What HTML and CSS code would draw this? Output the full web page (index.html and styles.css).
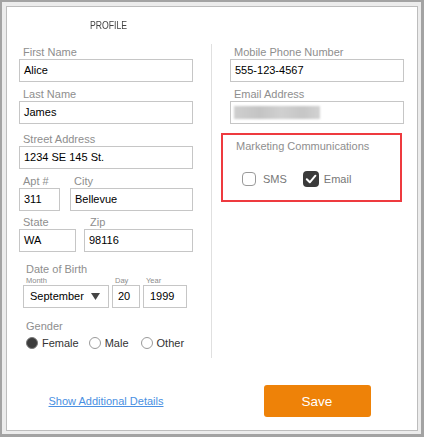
FILE: index.html
```html
<!DOCTYPE html>
<html>
<head>
<meta charset="utf-8">
<link rel="stylesheet" href="styles.css">
</head>
<body>
<div class="frame">
  <div class="card">
    <div class="header"><span class="title">PROFILE</span></div>
    <div class="main">
      <div class="col">
        <div class="field first">
          <div class="label">First Name</div>
          <div class="input">Alice</div>
        </div>
        <div class="field">
          <div class="label">Last Name</div>
          <div class="input">James</div>
        </div>
        <div class="field street">
          <div class="label">Street Address</div>
          <div class="input">1234 SE 145 St.</div>
        </div>
        <div class="pair apt-row">
          <div class="field apt">
            <div class="label">Apt #</div>
            <div class="input">311</div>
          </div>
          <div class="field city">
            <div class="label">City</div>
            <div class="input">Bellevue</div>
          </div>
        </div>
        <div class="pair state-row">
          <div class="field state">
            <div class="label">State</div>
            <div class="input">WA</div>
          </div>
          <div class="field zip">
            <div class="label zip-label">Zip</div>
            <div class="input">98116</div>
          </div>
        </div>
        <div class="section dob">
          <div class="label sec-label">Date of Birth</div>
          <div class="dob-row">
            <div class="dob-item month">
              <div class="sublabel">Month</div>
              <div class="input select"><span>September</span>
                <svg class="caret" width="9" height="7" viewBox="0 0 9 7"><polygon points="0,0 9,0 4.5,7" fill="#454545"/></svg>
              </div>
            </div>
            <div class="dob-item day">
              <div class="sublabel">Day</div>
              <div class="input dob-input">20</div>
            </div>
            <div class="dob-item year">
              <div class="sublabel">Year</div>
              <div class="input dob-input">1999</div>
            </div>
          </div>
        </div>
        <div class="section gender">
          <div class="label sec-label">Gender</div>
          <div class="radio-row">
            <div class="opt"><span class="radio checked"></span><span class="opt-text">Female</span></div>
            <div class="opt male"><span class="radio"></span><span class="opt-text">Male</span></div>
            <div class="opt other"><span class="radio"></span><span class="opt-text">Other</span></div>
          </div>
        </div>
      </div>
      <div class="divider"></div>
      <div class="col">
        <div class="field first">
          <div class="label">Mobile Phone Number</div>
          <div class="input">555-123-4567</div>
        </div>
        <div class="field">
          <div class="label">Email Address</div>
          <div class="input"><span class="blur"></span></div>
        </div>
        <div class="marketing">
          <div class="label mk-label">Marketing Communications</div>
          <div class="check-row">
            <div class="chk"><span class="box"></span><span class="chk-text">SMS</span></div>
            <div class="chk email"><span class="box on">
              <svg width="16" height="16" viewBox="0 0 16 16"><path d="M3.8 8.3 L6.8 11.3 L12.4 4.7" fill="none" stroke="#fff" stroke-width="2" stroke-linecap="round" stroke-linejoin="round"/></svg>
            </span><span class="chk-text">Email</span></div>
          </div>
        </div>
      </div>
    </div>
    <div class="footer">
      <a class="link" href="#">Show Additional Details</a>
      <span></span>
      <button class="save">Save</button>
    </div>
  </div>
</div>
</body>
</html>
```

FILE: styles.css
```css
html {
  background: #a3a3a3;
}
body {
  margin: 0;
  height: 437px;
  box-sizing: border-box;
  padding: 2px 3px 3px 2px;
  background: #a3a3a3;
  font-family: "Liberation Sans", Arial, sans-serif;
}
.frame {
  height: 100%;
  box-sizing: border-box;
  background: #ececec;
  padding: 4px 3px 3px 4px;
}
.card {
  height: 100%;
  box-sizing: border-box;
  background: #fff;
  border: 1px solid #bdbdbd;
}
.header {
  height: 37px;
  box-sizing: border-box;
  margin-left: 12px;
  width: 174px;
  padding: 12px 0 0 6px;
  text-align: center;
  font-size: 11px;
  line-height: 13px;
  color: #444;
}
.title {
  display: inline-block;
  transform: scaleX(0.79);
}
.main {
  display: grid;
  grid-template-columns: 174px 1px 174px;
  column-gap: 18px;
  padding-left: 12px;
  height: 314px;
}
.divider {
  background: #e0e0e0;
}
.col {
  display: flex;
  flex-direction: column;
}
.field {
  margin-top: 6px;
}
.field.first {
  margin-top: 2px;
}
.field.street {
  margin-top: 9px;
}
.label {
  font-size: 11px;
  line-height: 13px;
  color: #8e8e8e;
  padding-left: 4px;
  white-space: nowrap;
}
.input {
  height: 23px;
  box-sizing: border-box;
  border: 1px solid #c6c6c6;
  padding: 0 4px;
  font-size: 11px;
  line-height: 21px;
  color: #000;
  white-space: nowrap;
}
.pair {
  display: flex;
  justify-content: space-between;
}
.pair .field {
  margin-top: 0;
}
.apt-row {
  margin-top: 6px;
}
.state-row {
  margin-top: 5px;
}
.apt { width: 41px; }
.city { width: 123px; }
.state { width: 57px; }
.zip { width: 109px; }
.zip-label { padding-left: 6px; }
.section {
  margin-left: 4px;
}
.sec-label {
  padding-left: 3px;
}
.dob {
  margin-top: 11px;
}
.dob-row {
  display: flex;
  gap: 3px;
}
.dob-item {
  display: flex;
  flex-direction: column;
}
.sublabel {
  font-size: 7.5px;
  line-height: 9px;
  color: #8c8c8c;
  padding-left: 3px;
}
.month { width: 86px; }
.day { width: 28px; }
.year { width: 44px; }
.select {
  display: flex;
  align-items: center;
  justify-content: space-between;
  padding: 0 8px 0 6px;
}
.dob-input {
  padding: 0 5px;
}
.year .dob-input {
  padding: 0 6px;
}
.gender {
  margin-top: 12px;
}
.radio-row {
  display: flex;
  align-items: center;
  height: 16px;
  margin-top: 2px;
  padding-left: 3px;
}
.opt {
  display: flex;
  align-items: center;
}
.opt.male { margin-left: 10px; }
.opt.other { margin-left: 12px; }
.radio {
  width: 12px;
  height: 12px;
  box-sizing: border-box;
  border-radius: 50%;
  border: 1px solid #9a9a9a;
  background: #fff;
}
.radio.checked {
  background: #3c3c3c;
  border-color: #7a7a7a;
}
.opt-text {
  margin-left: 4px;
  font-size: 11px;
  color: #333;
}
.blur {
  display: block;
  margin: 4px 0 0 -1px;
  width: 86px;
  height: 13px;
  background: linear-gradient(90deg, #cfcfcf 0%, #c4c4c4 30%, #d0d0d0 55%, #c6c6c6 80%, #d2d2d2 100%);
  filter: blur(1px);
}
.marketing {
  margin-top: 9px;
  margin-left: -9px;
  width: 181px;
  box-sizing: border-box;
  border: 2px solid #ee3a3f;
  padding: 5px 0 13px 13px;
}
.mk-label {
  padding-left: 0;
}
.check-row {
  display: flex;
  align-items: center;
  height: 16px;
  margin-top: 18px;
  padding-left: 6px;
}
.chk {
  display: flex;
  align-items: center;
}
.chk.email {
  margin-left: 16px;
}
.box {
  width: 14px;
  height: 14px;
  box-sizing: border-box;
  border: 1.5px solid #9a9a9a;
  border-radius: 4px;
}
.box.on {
  width: 16px;
  height: 16px;
  border: none;
  background: #3a3a3a;
  display: flex;
}
.chk-text {
  margin-left: 7px;
  font-size: 11px;
  color: #777;
}
.email .chk-text {
  margin-left: 5px;
}
.footer {
  display: grid;
  grid-template-columns: 174px 1px 174px;
  column-gap: 18px;
  padding: 27px 0 0 12px;
  align-items: center;
}
.link {
  justify-self: center;
  font-size: 11px;
  color: #4a90e2;
  text-decoration: underline;
}
.save {
  justify-self: center;
  width: 107px;
  height: 32px;
  border: none;
  border-radius: 3px;
  background: #ee8208;
  color: #fff;
  font-family: "Liberation Sans", Arial, sans-serif;
  font-size: 13.5px;
  padding: 0;
}
```
